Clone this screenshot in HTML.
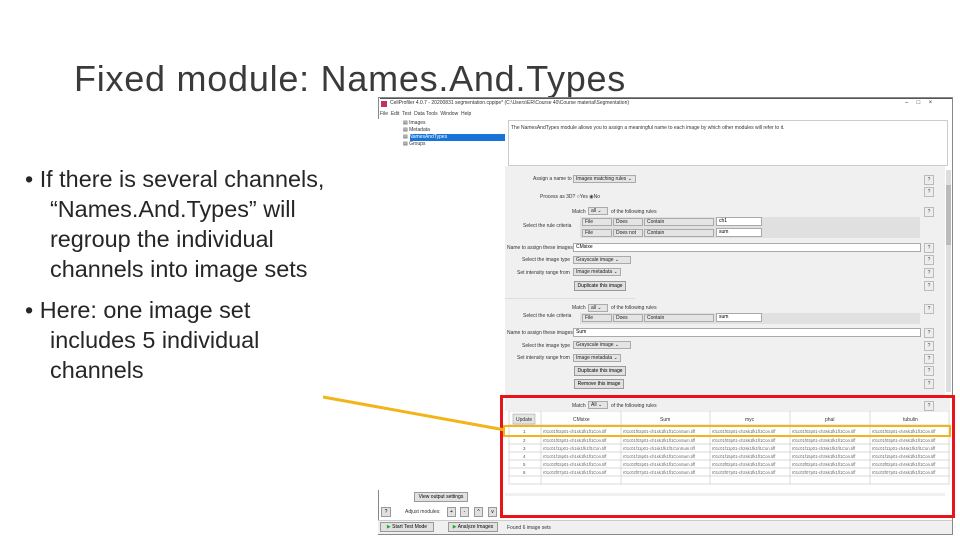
<!DOCTYPE html>
<html><head><meta charset="utf-8"><style>
*{margin:0;padding:0;box-sizing:border-box}
body{width:960px;height:540px;background:#fff;position:relative;overflow:hidden;font-family:"Liberation Sans",sans-serif}
.a{position:absolute}
.t{font-size:5px;color:#333;white-space:nowrap;line-height:1}
.q{position:absolute;left:924px;width:10px;height:10px;border:1px solid #bbb;background:#eee;font-size:5px;text-align:center;line-height:8px;color:#444}
.dd{position:absolute;height:8px;border:1px solid #aaa;background:#e4e4e4;font-size:5px;line-height:6px;padding-left:2px;color:#222}
.in{position:absolute;height:9px;border:1px solid #aaa;background:#fff;font-size:5px;line-height:7px;padding-left:2px}
.btn{position:absolute;height:10px;border:1px solid #999;background:#e1e1e1;font-size:5px;line-height:8px;text-align:center}
.bul{position:absolute;left:25px;font-size:23.4px;color:#262626;line-height:30px;white-space:nowrap}
</style></head><body>
<div class="a" style="left:74px;top:58px;font-size:36px;color:#3a3a3a;letter-spacing:0.75px;white-space:nowrap">Fixed module: Names.And.Types</div>
<div class="bul" style="top:164px">• If there is several channels,</div>
<div class="bul" style="top:194px;left:50px">“Names.And.Types” will<br>regroup the individual<br>channels into image sets</div>
<div class="bul" style="top:295px">• Here: one image set</div>
<div class="bul" style="top:325px;left:50px">includes 5 individual<br>channels</div>

<!-- window -->
<div class="a" style="left:378px;top:97px;width:575px;height:438px;border:1px solid #888;background:#fff"></div>
<div class="a" style="left:380px;top:98px;width:572px;height:1px;background:#555"></div>
<div class="a" style="left:381px;top:101px;width:6px;height:6px;background:#c0306a"></div>
<div class="a t" style="left:390px;top:101px">CellProfiler 4.0.7 - 20200831 segmentation.cppipe* (C:\Users\ER\Course 40\Course material\Segmentation)</div>
<div class="a t" style="left:905px;top:100px;font-size:6px">–&nbsp;&nbsp;&nbsp;&nbsp;&nbsp;□&nbsp;&nbsp;&nbsp;&nbsp;&nbsp;×</div>
<div class="a t" style="left:380px;top:112px">File&nbsp; Edit&nbsp; Test&nbsp; Data Tools&nbsp; Window&nbsp; Help</div>
<div class="a" style="left:378px;top:119px;width:127px;height:371px;background:#fff"></div>
<div class="a t" style="left:403px;top:121px">▤ Images</div>
<div class="a t" style="left:403px;top:128px">▤ Metadata</div>
<div class="a" style="left:410px;top:134px;width:95px;height:7px;background:#1a73d6"></div>
<div class="a t" style="left:403px;top:135px"><span style="color:#333">▤</span> <span style="color:#fff">NamesAndTypes</span></div>
<div class="a t" style="left:403px;top:142px">▤ Groups</div>
<div class="a" style="left:508px;top:120px;width:440px;height:46px;border:1px solid #ccc;background:#fff"></div>
<div class="a t" style="left:511px;top:126px">The NamesAndTypes module allows you to assign a meaningful name to each image by which other modules will refer to it.</div>
<div class="a" style="left:505px;top:166px;width:440px;height:330px;background:#f0f0f0"></div>
<div class="a" style="left:946px;top:170px;width:5px;height:222px;background:#ddd"></div>
<div class="a" style="left:946px;top:185px;width:5px;height:60px;background:#bbb"></div>

<div class="a t" style="left:533px;top:177px">Assign a name to</div><div class="dd" style="left:573px;top:175px;width:63px">Images matching rules ⌄</div><div class="q" style="top:175px">?</div>
<div class="a t" style="left:540px;top:195px">Process as 3D? ○Yes ◉No</div><div class="q" style="top:187px">?</div>
<div class="a t" style="left:572px;top:210px">Match</div><div class="dd" style="left:588px;top:207px;width:20px">all ⌄</div><div class="a t" style="left:611px;top:210px">of the following rules</div><div class="q" style="top:207px">?</div>
<div class="a t" style="left:523px;top:224px">Select the rule criteria</div>
<div class="a" style="left:580px;top:217px;width:340px;height:21px;background:#e0e0e0"></div>
<div class="dd" style="left:582px;top:218px;width:30px">File</div><div class="dd" style="left:613px;top:218px;width:30px">Does</div><div class="dd" style="left:644px;top:218px;width:70px">Contain</div><div class="in" style="left:716px;top:217px;width:46px">ch1</div>
<div class="dd" style="left:582px;top:229px;width:30px">File</div><div class="dd" style="left:613px;top:229px;width:30px">Does not</div><div class="dd" style="left:644px;top:229px;width:70px">Contain</div><div class="in" style="left:716px;top:228px;width:46px">sum</div>
<div class="a t" style="left:507px;top:246px">Name to assign these images</div><div class="in" style="left:573px;top:243px;width:348px">CMsixe</div><div class="q" style="top:243px">?</div>
<div class="a t" style="left:522px;top:258px">Select the image type</div><div class="dd" style="left:573px;top:256px;width:58px">Grayscale image ⌄</div><div class="q" style="top:255px">?</div>
<div class="a t" style="left:517px;top:271px">Set intensity range from</div><div class="dd" style="left:573px;top:268px;width:48px">Image metadata ⌄</div><div class="q" style="top:268px">?</div>
<div class="btn" style="left:574px;top:281px;width:52px">Duplicate this image</div><div class="q" style="top:281px">?</div>
<div class="a" style="left:505px;top:298px;width:130px;height:1px;background:#ddd"></div>
<div class="a t" style="left:572px;top:306px">Match</div><div class="dd" style="left:588px;top:304px;width:20px">all ⌄</div><div class="a t" style="left:611px;top:306px">of the following rules</div><div class="q" style="top:304px">?</div>
<div class="a t" style="left:523px;top:314px">Select the rule criteria</div>
<div class="a" style="left:580px;top:313px;width:340px;height:11px;background:#e0e0e0"></div>
<div class="dd" style="left:582px;top:314px;width:30px">File</div><div class="dd" style="left:613px;top:314px;width:30px">Does</div><div class="dd" style="left:644px;top:314px;width:70px">Contain</div><div class="in" style="left:716px;top:313px;width:46px">sum</div>
<div class="a t" style="left:507px;top:331px">Name to assign these images</div><div class="in" style="left:573px;top:328px;width:348px">Sum</div><div class="q" style="top:328px">?</div>
<div class="a t" style="left:522px;top:344px">Select the image type</div><div class="dd" style="left:573px;top:341px;width:58px">Grayscale image ⌄</div><div class="q" style="top:341px">?</div>
<div class="a t" style="left:517px;top:356px">Set intensity range from</div><div class="dd" style="left:573px;top:354px;width:48px">Image metadata ⌄</div><div class="q" style="top:354px">?</div>
<div class="btn" style="left:574px;top:366px;width:52px">Duplicate this image</div><div class="q" style="top:366px">?</div>
<div class="btn" style="left:574px;top:379px;width:50px">Remove this image</div><div class="q" style="top:379px">?</div>

<!-- table area -->
<div class="a" style="left:505px;top:398px;width:445px;height:95px;background:#fff"></div>
<div class="a" style="left:505px;top:398px;width:445px;height:13px;background:#f0f0f0"></div>
<div class="a t" style="left:572px;top:404px">Match</div><div class="dd" style="left:588px;top:401px;width:20px">All ⌄</div><div class="a t" style="left:611px;top:404px">of the following rules</div><div class="q" style="top:401px">?</div>
<svg class="a" style="left:505px;top:411px" width="445" height="75">
<g fill="none" stroke="#ccc" stroke-width="0.7">
<rect x="4" y="0" width="440" height="73"/>
<line x1="36" y1="0" x2="36" y2="73"/><line x1="116" y1="0" x2="116" y2="73"/><line x1="205" y1="0" x2="205" y2="73"/><line x1="285" y1="0" x2="285" y2="73"/><line x1="365" y1="0" x2="365" y2="73"/>
<line x1="4" y1="14" x2="445" y2="14"/><line x1="4" y1="25" x2="445" y2="25"/><line x1="4" y1="33" x2="445" y2="33"/><line x1="4" y1="41" x2="445" y2="41"/><line x1="4" y1="49" x2="445" y2="49"/><line x1="4" y1="57" x2="445" y2="57"/><line x1="4" y1="65" x2="445" y2="65"/>
</g>
<rect x="8" y="3" width="22" height="10" fill="#e4e4e4" stroke="#999" stroke-width="0.5"/>
<g font-family="Liberation Sans" font-size="5" fill="#333">
<text x="11" y="10">Update</text><text x="68" y="10">CMsixe</text><text x="155" y="10">Sum</text><text x="240" y="10">myc</text><text x="320" y="10">phal</text><text x="398" y="10">tubulin</text>
<g font-size="4.5" fill="#555">
<text x="18" y="22">1</text><text x="18" y="31">2</text><text x="18" y="39">3</text><text x="18" y="47">4</text><text x="18" y="55">5</text><text x="18" y="63">6</text>
</g>
<g font-size="4.2" fill="#666">
<text x="38" y="22">r01c01f02p01-ch1sk1fk1fl1Con.tiff</text><text x="118" y="22">r01c01f02p01-ch1sk1fk1fl1ConSum.tiff</text><text x="207" y="22">r01c01f02p01-ch2sk1fk1fl1Con.tiff</text><text x="287" y="22">r01c01f02p01-ch3sk1fk1fl1Con.tiff</text><text x="367" y="22">r01c01f02p01-ch4sk1fk1fl1Con.tiff</text>
<text x="38" y="31">r01c01f03p01-ch1sk1fk1fl1Con.tiff</text><text x="118" y="31">r01c01f03p01-ch1sk1fk1fl1ConSum.tiff</text><text x="207" y="31">r01c01f03p01-ch2sk1fk1fl1Con.tiff</text><text x="287" y="31">r01c01f03p01-ch3sk1fk1fl1Con.tiff</text><text x="367" y="31">r01c01f03p01-ch4sk1fk1fl1Con.tiff</text>
<text x="38" y="39">r01c01f11p01-ch1sk1fk1fl1Con.tiff</text><text x="118" y="39">r01c01f11p01-ch1sk1fk1fl1ConSum.tiff</text><text x="207" y="39">r01c01f11p01-ch2sk1fk1fl1Con.tiff</text><text x="287" y="39">r01c01f11p01-ch3sk1fk1fl1Con.tiff</text><text x="367" y="39">r01c01f11p01-ch4sk1fk1fl1Con.tiff</text>
<text x="38" y="47">r01c01f15p01-ch1sk1fk1fl1Con.tiff</text><text x="118" y="47">r01c01f15p01-ch1sk1fk1fl1ConSum.tiff</text><text x="207" y="47">r01c01f15p01-ch2sk1fk1fl1Con.tiff</text><text x="287" y="47">r01c01f15p01-ch3sk1fk1fl1Con.tiff</text><text x="367" y="47">r01c01f15p01-ch4sk1fk1fl1Con.tiff</text>
<text x="38" y="55">r01c02f02p01-ch1sk1fk1fl1Con.tiff</text><text x="118" y="55">r01c02f02p01-ch1sk1fk1fl1ConSum.tiff</text><text x="207" y="55">r01c02f02p01-ch2sk1fk1fl1Con.tiff</text><text x="287" y="55">r01c02f02p01-ch3sk1fk1fl1Con.tiff</text><text x="367" y="55">r01c02f02p01-ch4sk1fk1fl1Con.tiff</text>
<text x="38" y="63">r01c02f07p01-ch1sk1fk1fl1Con.tiff</text><text x="118" y="63">r01c02f07p01-ch1sk1fk1fl1ConSum.tiff</text><text x="207" y="63">r01c02f07p01-ch2sk1fk1fl1Con.tiff</text><text x="287" y="63">r01c02f07p01-ch3sk1fk1fl1Con.tiff</text><text x="367" y="63">r01c02f07p01-ch4sk1fk1fl1Con.tiff</text>
</g></g></svg>

<!-- bottom left -->
<div class="btn" style="left:414px;top:492px;width:54px">View output settings</div>
<div class="btn" style="left:381px;top:507px;width:10px">?</div>
<div class="a t" style="left:405px;top:510px">Adjust modules:</div>
<div class="btn" style="left:447px;top:507px;width:9px">+</div><div class="btn" style="left:460px;top:507px;width:9px">-</div><div class="btn" style="left:474px;top:507px;width:9px">^</div><div class="btn" style="left:488px;top:507px;width:9px">v</div>
<div class="a" style="left:378px;top:520px;width:574px;height:14px;background:#f0f0f0;border-top:1px solid #ccc"></div>
<div class="btn" style="left:380px;top:522px;width:54px;height:10px"><span style="color:#2a2">▶</span> Start Test Mode</div>
<div class="btn" style="left:448px;top:522px;width:50px;height:10px"><span style="color:#2a2">▶</span> Analyze Images</div>
<div class="a t" style="left:507px;top:526px">Found 6 image sets</div>

<!-- annotations -->
<div class="a" style="left:500px;top:395px;width:455px;height:123px;border:3px solid #e8141a"></div>
<div class="a" style="left:503px;top:425px;width:448px;height:12px;border:2.5px solid #f3b41a"></div>
<svg class="a" style="left:0;top:0" width="960" height="540"><line x1="323" y1="397" x2="505" y2="430" stroke="#f3b41a" stroke-width="3"/></svg>
</body></html>
